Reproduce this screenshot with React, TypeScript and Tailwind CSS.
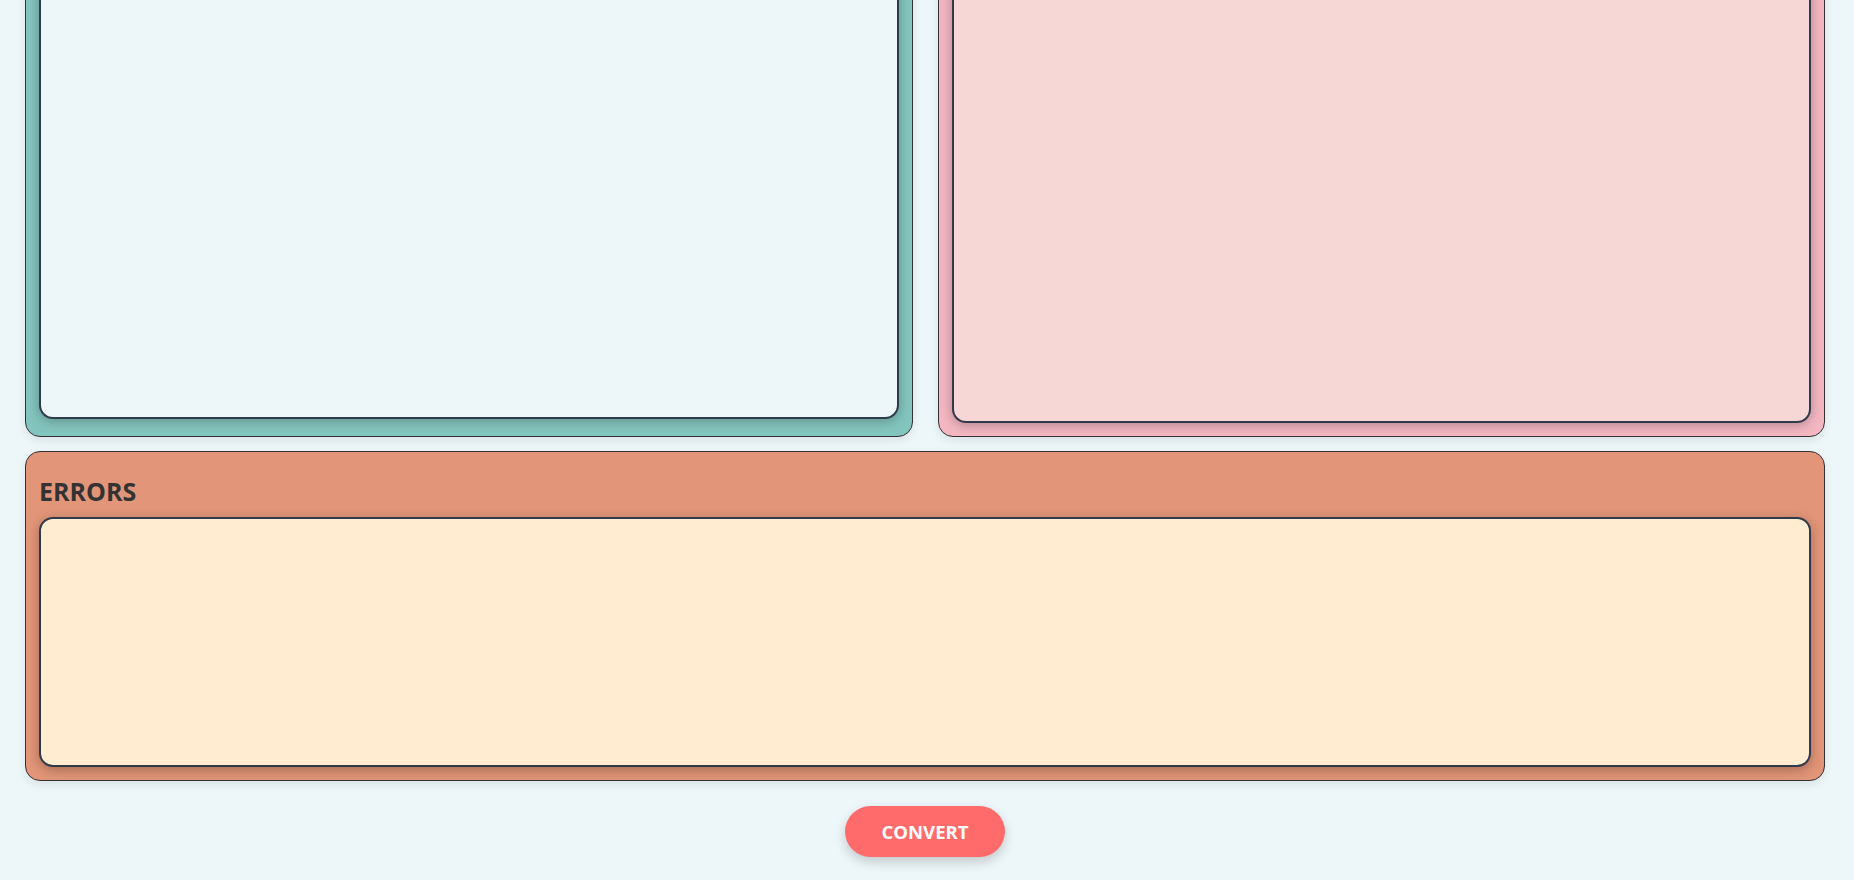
import React from "react";

export default function App() {
  const font = { fontFamily: '"Open Sans", "Noto Sans", "DejaVu Sans", sans-serif' };
  return (
    <div className="min-h-[880px] w-full overflow-hidden bg-[#edf6f9]" style={font}>
      <div className="-mt-[200px] flex flex-col pl-[25px] pr-[29px] pb-[23px]">
        <div className="grid grid-cols-2 gap-[25px]">
          <div className="flex h-[637px] flex-col rounded-[15px] border border-[#333] bg-[#83c5be] p-[13px] pb-[17px] shadow-[0_4px_10px_rgba(0,0,0,0.08)]">
            <div className="flex-1 rounded-[14px] border-2 border-[#2f3b4c] bg-[#edf6f9] shadow-[0_2px_12px_rgba(0,0,0,0.28)]" />
          </div>
          <div className="flex h-[637px] flex-col rounded-[15px] border border-[#333] bg-[#f4b7c2] p-[13px] shadow-[0_4px_10px_rgba(0,0,0,0.08)]">
            <div className="flex-1 rounded-[14px] border-2 border-[#2f3b4c] bg-[#f7d6d6] shadow-[0_2px_12px_rgba(0,0,0,0.28)]" />
          </div>
        </div>

        <div className="mt-[14px] flex flex-col rounded-[15px] border border-[#333] bg-[#e29578] px-[13px] pt-[13px] pb-[13px] shadow-[0_4px_10px_rgba(0,0,0,0.08)]">
          <h2 className="mt-[10px] mb-[10px] text-[25px] leading-[32px] font-bold text-[#333333]">ERRORS</h2>
          <div className="h-[250px] rounded-[14px] border-2 border-[#2f3b4c] bg-[#ffecd1] shadow-[0_3px_12px_rgba(0,0,0,0.28)]" />
        </div>

        <div className="mt-[25px] flex justify-center">
          <button className="h-[51px] w-[160px] rounded-full bg-[#ff6b6b] text-[18.5px] font-bold text-white shadow-[0_5px_12px_rgba(0,0,0,0.18)]">
            CONVERT
          </button>
        </div>
      </div>
    </div>
  );
}
